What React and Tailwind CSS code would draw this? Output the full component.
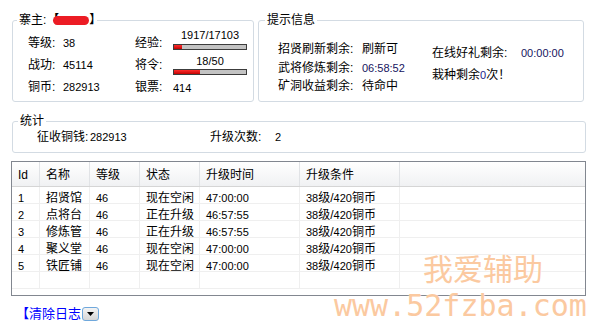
import React from 'react'

// 数值用窄字体,中文回落到 Noto CJK
const rows = [
  { id: 1, name: '招贤馆', level: 46, state: '现在空闲', time: '47:00:00', cond: '38级/420铜币' },
  { id: 2, name: '点将台', level: 46, state: '正在升级', time: '46:57:55', cond: '38级/420铜币' },
  { id: 3, name: '修炼管', level: 46, state: '正在升级', time: '46:57:55', cond: '38级/420铜币' },
  { id: 4, name: '聚义堂', level: 46, state: '现在空闲', time: '47:00:00', cond: '38级/420铜币' },
  { id: 5, name: '铁匠铺', level: 46, state: '现在空闲', time: '47:00:00', cond: '38级/420铜币' },
]

const COLS = 'grid grid-cols-[28px_50px_50px_60px_100px_100px_1fr]'

function Num({ children, className = '' }) {
  return <span className={`text-[11px] ${className}`}>{children}</span>
}

function Bar({ value, max }) {
  return (
    <div className="h-[6px] w-[74px] border border-[#3c3c3c] bg-[#c3c3c3]">
      <div
        className="h-full bg-gradient-to-b from-[#ff2a2a] to-[#c40000]"
        style={{ width: `${(value / max) * 100}%` }}
      />
    </div>
  )
}

function Cell({ children, last }) {
  return (
    <div className={`flex items-center pl-[6px] pt-[3px] whitespace-nowrap ${last ? '' : 'border-r border-[#efefef]'}`}>
      {children}
    </div>
  )
}

export default function App() {
  return (
    <div className="relative h-[326px] w-[593px] overflow-hidden bg-white pt-[12px] text-[12px] leading-[16px] text-black font-['Liberation_Sans','Noto_Sans_CJK_SC',sans-serif]">
      {/* 上面两块 */}
      <div className="flex gap-[4px] pl-[12px]">
        <fieldset className="h-[90px] w-[242px] rounded-[3px] border border-[#d3dbe3] pl-[4px]">
          <legend className="flex items-center px-[2px] leading-[16px]">
            寨主:
            <span className="ml-[1px]">【</span>
            <span className="-ml-[6px] h-[9px] w-[36px] rounded-full bg-[#ec1c24]" />
            <span className="-mr-[6px]">】</span>
          </legend>
          <div className="ml-[11px] flex">
            <div className="mt-[4px] flex w-[35px] flex-col">
              <div className="flex h-[22px] items-center">等级:</div>
              <div className="flex h-[22px] items-center">战功:</div>
              <div className="flex h-[22px] items-center">铜币:</div>
            </div>
            <div className="mt-[4px] flex w-[72px] flex-col">
              <div className="flex h-[22px] items-center"><Num>38</Num></div>
              <div className="flex h-[22px] items-center"><Num>45114</Num></div>
              <div className="flex h-[22px] items-center"><Num>282913</Num></div>
            </div>
            <div className="mt-[4px] flex w-[38px] flex-col">
              <div className="flex h-[22px] items-center">经验:</div>
              <div className="flex h-[22px] items-center">将令:</div>
              <div className="flex h-[22px] items-center">银票:</div>
            </div>
            <div className="flex w-[74px] flex-col">
              <div className="flex h-[14px] items-center justify-center"><Num>1917/17103</Num></div>
              <div className="mt-[2px]"><Bar value={1917} max={17103} /></div>
              <div className="mt-[4px] flex h-[14px] items-center justify-center"><Num>18/50</Num></div>
              <div className="mt-[1px]"><Bar value={18} max={50} /></div>
              <div className="mt-[6px] flex h-[14px] items-center"><Num>414</Num></div>
            </div>
          </div>
        </fieldset>

        <fieldset className="h-[90px] w-[326px] rounded-[3px] border border-[#d3dbe3] pl-[6px]">
          <legend className="px-[2px] leading-[16px]">提示信息</legend>
          <div className="ml-[13px] flex">
            <div className="mt-[12px] flex w-[84px] flex-col">
              <div className="flex h-[18.5px] items-center">招贤刷新剩余:</div>
              <div className="flex h-[18.5px] items-center">武将修炼剩余:</div>
              <div className="flex h-[18.5px] items-center">矿洞收益剩余:</div>
            </div>
            <div className="mt-[12px] flex w-[70px] flex-col">
              <div className="flex h-[18.5px] items-center">刷新可</div>
              <div className="flex h-[18.5px] items-center"><Num className="text-[#15135e]">06:58:52</Num></div>
              <div className="flex h-[18.5px] items-center">待命中</div>
            </div>
            <div className="mt-[14px] flex w-[89px] flex-col">
              <div className="flex h-[22px] items-center">在线好礼剩余:</div>
              <div className="flex h-[22px] items-center whitespace-nowrap">
                栽种剩余<Num className="text-[#1a1a8a]">0</Num>次！
              </div>
            </div>
            <div className="mt-[14px] flex flex-col">
              <div className="flex h-[22px] items-center"><Num className="text-[#15135e]">00:00:00</Num></div>
            </div>
          </div>
        </fieldset>
      </div>

      {/* 统计 */}
      <fieldset className="ml-[12px] mt-[11px] h-[40px] w-[574px] rounded-[3px] border border-[#d3dbe3] pl-[5px]">
        <legend className="px-[2px] leading-[16px]">统计</legend>
        <div className="ml-[19px] flex h-[16px] items-center">
          <span className="w-[53px]">征收铜钱:</span>
          <span className="w-[120px]"><Num>282913</Num></span>
          <span className="w-[65px]">升级次数:</span>
          <Num>2</Num>
        </div>
      </fieldset>

      {/* 列表 */}
      <div className="ml-[11px] mt-[8px] h-[135px] w-[575px] overflow-hidden border border-[#828790]">
        <div className={`${COLS} h-[25px] border-b border-[#d5d5d5] bg-gradient-to-b from-white to-[#f0f1f3]`}>
          {['Id', '名称', '等级', '状态', '升级时间', '升级条件', ''].map((h, i) => (
            <div
              key={i}
              className={`flex items-center pl-[6px] pt-[2px] ${i < 6 ? 'border-r border-[#e1e3e6]' : ''}`}
            >
              {h}
            </div>
          ))}
        </div>
        {rows.map((r) => (
          <div key={r.id} className={`${COLS} h-[17px] border-b border-[#efefef]`}>
            <Cell><Num>{r.id}</Num></Cell>
            <Cell>{r.name}</Cell>
            <Cell><Num>{r.level}</Num></Cell>
            <Cell>{r.state}</Cell>
            <Cell><Num>{r.time}</Num></Cell>
            <Cell><Num>38</Num>级/<Num>420</Num>铜币</Cell>
            <Cell last />
          </div>
        ))}
        <div className={`${COLS} h-[17px] border-b border-[#efefef]`}>
          <Cell /><Cell /><Cell /><Cell /><Cell /><Cell /><Cell last />
        </div>
      </div>

      {/* 清除日志 */}
      <div className="mt-[10px] flex h-[16px] items-center pl-[16px] text-[13px] text-[#0000ff]">
        <span>【清除日志</span>
        <button className="ml-[1px] flex h-[14px] w-[17px] items-center justify-center rounded-[3px] border border-[#6fa8dc] bg-gradient-to-b from-[#f4f4f4] to-[#d6d6d6]">
          <svg width="7" height="4" viewBox="0 0 7 4"><path d="M0 0h7L3.5 4z" fill="#000" /></svg>
        </button>
      </div>

      {/* 水印 */}
      <div className="pointer-events-none absolute left-[423px] top-[252px] text-[30px] leading-[30px] text-[#fbc9a0] [text-shadow:0_0_2px_#fff] font-['Noto_Sans_CJK_SC',sans-serif]">
        我爱辅助
      </div>
      <div className="pointer-events-none absolute left-[334px] top-[291px] text-[30px] leading-[30px] text-[#fbc9a0] [text-shadow:0_0_2px_#fff] font-['DejaVu_Sans_Mono',monospace]">
        www.52fzba.com
      </div>
    </div>
  )
}
